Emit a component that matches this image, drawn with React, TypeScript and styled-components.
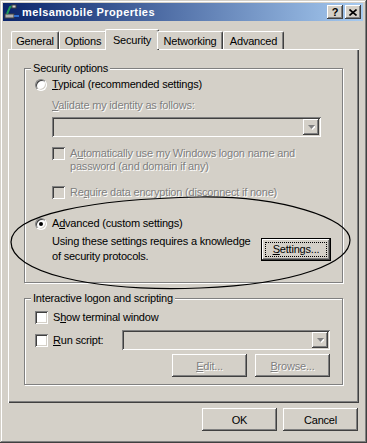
import styled, { createGlobalStyle, css } from 'styled-components';

const FACE = '#d4d0c8';
const SHADOW = '#808080';
const DARK = '#404040';
const HILITE = '#ffffff';

const GlobalStyle = createGlobalStyle`
  html, body {
    margin: 0;
    padding: 0;
    background: ${FACE};
  }
  body {
    font-family: "Liberation Sans", Arial, sans-serif;
    font-size: 11px;
    letter-spacing: -0.2px;
    color: #000;
  }
`;

const raised = css`
  box-shadow: inset -1px -1px ${DARK}, inset 1px 1px ${HILITE}, inset -2px -2px ${SHADOW}, inset 2px 2px ${FACE};
`;

const sunken = css`
  box-shadow: inset 1px 1px ${SHADOW}, inset -1px -1px ${HILITE}, inset 2px 2px ${DARK}, inset -2px -2px ${FACE};
`;

const grayed = css`
  color: ${SHADOW};
  text-shadow: 1px 1px 0 ${HILITE};
`;

const Window = styled.div`
  position: relative;
  box-sizing: border-box;
  width: 367px;
  height: 443px;
  padding: 3px 4px 4px 3px;
  background: ${FACE};
  box-shadow: inset -1px -1px ${DARK}, inset 1px 1px ${FACE}, inset -2px -2px ${SHADOW}, inset 2px 2px ${HILITE};
  display: flex;
  flex-direction: column;
  overflow: hidden;
`;

const TitleBar = styled.div`
  height: 18px;
  display: flex;
  align-items: center;
  padding: 0 2px 0 1px;
  background: linear-gradient(to right, #0a246a, #a6caf0);
  color: #fff;
  font-weight: bold;
  letter-spacing: 0.4px;
`;

const TitleText = styled.span`
  margin-left: 2px;
  flex: 1;
`;

const CaptionButton = styled.div<{ $gap?: number }>`
  box-sizing: border-box;
  width: 16px;
  height: 14px;
  margin-left: ${(p) => p.$gap ?? 0}px;
  background: ${FACE};
  ${raised};
  color: #000;
  font-size: 11px;
  line-height: 14px;
  display: flex;
  align-items: center;
  justify-content: center;
  letter-spacing: 0;
`;

const TabRow = styled.div`
  position: relative;
  z-index: 1;
  height: 20px;
  margin-top: 8px;
  padding-left: 8px;
  display: flex;
  align-items: flex-start;
`;

const Tab = styled.div<{ $active?: boolean; $w: number }>`
  box-sizing: border-box;
  width: ${(p) => p.$w + (p.$active ? 4 : 0)}px;
  height: ${(p) => (p.$active ? 21 : 18)}px;
  margin: ${(p) => (p.$active ? '0 -2px' : '2px 0 0')};
  background: ${FACE};
  border-top: 1px solid ${HILITE};
  border-left: 1px solid ${HILITE};
  border-right: 1px solid ${DARK};
  border-radius: 2px 2px 0 0;
  box-shadow: inset -1px 0 ${SHADOW};
  display: flex;
  align-items: center;
  justify-content: center;
`;

const Panel = styled.div`
  box-sizing: border-box;
  height: 354px;
  margin: 0 4px 0 5px;
  padding: 19px 16px 0;
  box-shadow: inset 1px 1px ${HILITE}, inset -1px -1px ${DARK}, inset -2px -2px ${SHADOW};
  display: flex;
  flex-direction: column;
`;

const Group = styled.div<{ $h: number; $mt?: number }>`
  box-sizing: border-box;
  height: ${(p) => p.$h}px;
  margin-top: ${(p) => p.$mt ?? 0}px;
  padding-left: 10px;
  border: 1px solid ${SHADOW};
  box-shadow: inset 1px 1px ${HILITE}, 1px 1px ${HILITE};
  display: flex;
  flex-direction: column;
`;

const Legend = styled.div`
  align-self: flex-start;
  margin: -7px 0 0 -4px;
  padding: 0 2px;
  line-height: 13px;
  background: ${FACE};
`;

const Row = styled.div<{ $mt: number; $indent?: number; $off?: boolean }>`
  display: flex;
  align-items: center;
  min-height: 13px;
  line-height: 13px;
  margin-top: ${(p) => p.$mt}px;
  margin-left: ${(p) => p.$indent ?? 0}px;
  ${(p) => p.$off && grayed};
`;

const TopRow = styled(Row)`
  align-items: flex-start;
`;

const Radio = styled.span<{ $on?: boolean }>`
  box-sizing: border-box;
  flex: none;
  width: 12px;
  height: 12px;
  margin-right: 5px;
  border-radius: 50%;
  background: ${HILITE};
  border: 1px solid;
  border-color: ${SHADOW} ${HILITE} ${HILITE} ${SHADOW};
  box-shadow: inset 1px 1px ${DARK}, inset -1px -1px ${FACE};
  display: flex;
  align-items: center;
  justify-content: center;
  &::after {
    content: '';
    width: 4px;
    height: 4px;
    border-radius: 50%;
    background: ${(p) => (p.$on ? '#000' : 'transparent')};
  }
`;

const Check = styled.span<{ $off?: boolean }>`
  box-sizing: border-box;
  flex: none;
  width: 13px;
  height: 13px;
  margin-right: 5px;
  background: ${(p) => (p.$off ? FACE : HILITE)};
  ${sunken};
`;

const Combo = styled.div<{ $w: number; $mr?: number }>`
  box-sizing: border-box;
  width: ${(p) => p.$w}px;
  height: 20px;
  margin-right: ${(p) => p.$mr ?? 0}px;
  padding: 2px;
  background: ${FACE};
  ${sunken};
  display: flex;
  justify-content: flex-end;
`;

const ComboArrow = styled.div`
  box-sizing: border-box;
  width: 16px;
  height: 16px;
  background: ${FACE};
  ${raised};
  display: flex;
  align-items: center;
  justify-content: center;
`;

const Block = styled.div`
  line-height: 15px;
`;

const Button = styled.button<{ $w?: number; $default?: boolean }>`
  position: relative;
  box-sizing: border-box;
  width: ${(p) => p.$w ?? 75}px;
  height: 23px;
  padding: 0;
  border: ${(p) => (p.$default ? '1px solid #000' : 'none')};
  background: ${FACE};
  ${raised};
  font: inherit;
  letter-spacing: inherit;
  color: #000;
  &:disabled {
    ${grayed};
  }
  ${(p) =>
    p.$default &&
    css`
      &::after {
        content: '';
        position: absolute;
        inset: 3px;
        border: 1px dotted #000;
      }
    `}
`;

const ButtonRow = styled.div<{ $mt: number; $mr: number; $gap: number }>`
  display: flex;
  justify-content: flex-end;
  gap: ${(p) => p.$gap}px;
  margin-top: ${(p) => p.$mt}px;
  margin-right: ${(p) => p.$mr}px;
`;

const Spring = styled.span`
  flex: 1;
`;

const SettingsButton = styled(Button)`
  margin: 4px 11px 0 auto;
`;

const Scribble = styled.svg`
  position: absolute;
  left: 0;
  top: 0;
  pointer-events: none;
`;

function Arrow() {
  return (
    <svg width="7" height="5" viewBox="0 0 7 5">
      <path d="M1 1h7l-3.5 4z" fill={HILITE} />
      <path d="M0 0h7l-3.5 4z" fill={SHADOW} />
    </svg>
  );
}

function ConnIcon() {
  return (
    <svg width="16" height="16" viewBox="0 0 16 16">
      <rect x="1" y="10" width="9" height="4" fill="#b0b0b0" stroke="#404040" strokeWidth="1" />
      <path d="M3 10 L6 3 L9 2" stroke="#1f9a5a" strokeWidth="2" fill="none" />
      <rect x="8" y="1" width="4" height="3" fill="#d0d0d0" stroke="#404040" strokeWidth="1" />
      <path d="M10 12 H15" stroke="#2e6fd0" strokeWidth="2" />
    </svg>
  );
}

export default function App() {
  return (
    <>
      <GlobalStyle />
      <Window>
        <TitleBar>
          <ConnIcon />
          <TitleText>melsamobile Properties</TitleText>
          <CaptionButton>?</CaptionButton>
          <CaptionButton $gap={2}>
            <svg width="8" height="7" viewBox="0 0 8 7">
              <path d="M0.5 0.5 L7.5 6.5 M7.5 0.5 L0.5 6.5" stroke="#000" strokeWidth="1.6" />
            </svg>
          </CaptionButton>
        </TitleBar>

        <TabRow>
          <Tab $w={48}>General</Tab>
          <Tab $w={48}>Options</Tab>
          <Tab $w={50} $active>
            Security
          </Tab>
          <Tab $w={66}>Networking</Tab>
          <Tab $w={61}>Advanced</Tab>
        </TabRow>

        <Panel>
          <Group $h={215}>
            <Legend>Security options</Legend>
            <Row $mt={3}>
              <Radio />
              <span>
                <u>T</u>ypical (recommended settings)
              </span>
            </Row>
            <Row $mt={8} $indent={17} $off>
              <span>
                <u>V</u>alidate my identity as follows:
              </span>
            </Row>
            <Row $mt={5} $indent={17}>
              <Combo $w={269}>
                <ComboArrow>
                  <Arrow />
                </ComboArrow>
              </Combo>
            </Row>
            <TopRow $mt={10} $indent={17} $off>
              <Check $off />
              <span>
                A<u>u</u>tomatically use my Windows logon name and
                <br />
                password (and domain if any)
              </span>
            </TopRow>
            <Row $mt={13} $indent={17} $off>
              <Check $off />
              <span>
                Re<u>q</u>uire data encryption (disconnect if none)
              </span>
            </Row>
            <Row $mt={18}>
              <Radio $on />
              <span>
                A<u>d</u>vanced (custom settings)
              </span>
            </Row>
            <TopRow $mt={4} $indent={17}>
              <Block>
                Using these settings requires a knowledge
                <br />
                of security protocols.
              </Block>
              <SettingsButton $w={70} $default>
                <u>S</u>ettings...
              </SettingsButton>
            </TopRow>
          </Group>

          <Group $h={87} $mt={15}>
            <Legend>Interactive logon and scripting</Legend>
            <Row $mt={6}>
              <Check />
              <span>
                S<u>h</u>ow terminal window
              </span>
            </Row>
            <Row $mt={6}>
              <Check />
              <span>
                <u>R</u>un script:
              </span>
              <Spring />
              <Combo $w={208} $mr={12}>
                <ComboArrow>
                  <Arrow />
                </ComboArrow>
              </Combo>
            </Row>
            <ButtonRow $mt={4} $mr={12} $gap={8}>
              <Button disabled>
                <u>E</u>dit...
              </Button>
              <Button disabled>
                <u>B</u>rowse...
              </Button>
            </ButtonRow>
          </Group>
        </Panel>

        <ButtonRow $mt={5} $mr={5} $gap={6}>
          <Button>OK</Button>
          <Button>Cancel</Button>
        </ButtonRow>

        <Scribble width="367" height="443" viewBox="0 0 367 443">
          <path
            d="M11 242 C11 215 90 199 200 197 C280 196 350 218 350 240 C350 262 300 284 200 288 C90 292 11 272 11 242 Z"
            fill="none"
            stroke="#000"
            strokeWidth="1.2"
          />
        </Scribble>
      </Window>
    </>
  );
}
